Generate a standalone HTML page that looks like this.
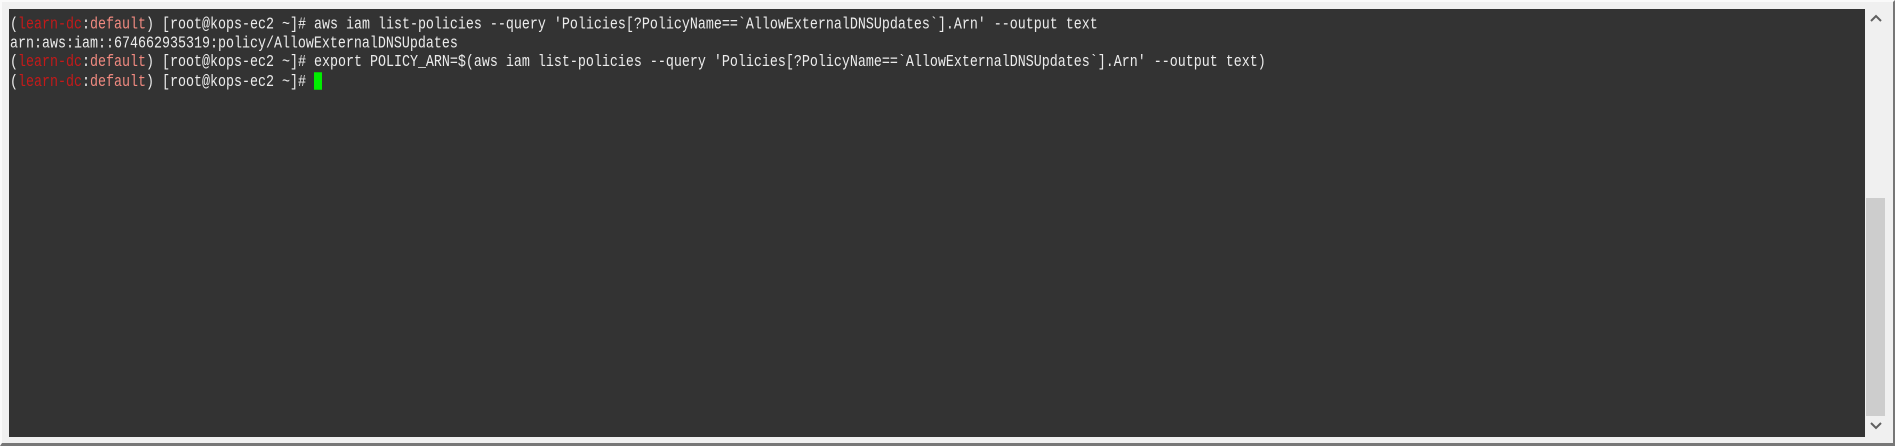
<!DOCTYPE html>
<html><head><style>
html,body{margin:0;padding:0;width:1895px;height:446px;overflow:hidden;background:#f0f0f0;}
.bord{position:absolute;left:0;top:0;border-right:2px solid #777;border-bottom:3px solid #777;border-left:2px solid #fafafa;border-top:2px solid #fafafa;box-sizing:border-box;width:1895px;height:446px;}
.term{position:absolute;left:9px;top:9px;width:1856px;height:428px;background:#333333;}
.txt{position:absolute;left:10px;top:16px;font-family:"Liberation Mono",monospace;font-size:13.33px;color:#ececec;transform:scaleY(1.25);transform-origin:0 0;}
.l{height:15px;line-height:15px;white-space:pre;}
.r{color:#c41a1a}.p{color:#f08a80}
.cur{display:inline-block;width:8px;height:14px;background:#00ee00;vertical-align:-3px;}
.sb{position:absolute;left:1866px;top:9px;width:19px;height:428px;background:#f0f0f0;}
.thumb{position:absolute;left:1866px;top:198px;width:19px;height:218px;background:#cdcdcd;}
</style></head><body>
<div class="bord"></div>
<div class="term"></div>
<div class="sb"></div>
<div class="thumb"></div>
<svg style="position:absolute;left:1870px;top:14px" width="12" height="10"><path d="M1 7 L6 2 L11 7" stroke="#606060" stroke-width="2" fill="none"/></svg>
<svg style="position:absolute;left:1870px;top:421px" width="12" height="10"><path d="M1 2 L6 7 L11 2" stroke="#606060" stroke-width="2" fill="none"/></svg>
<div class="txt"><div class="l">(<span class="r">learn-dc</span>:<span class="p">default</span>) [root@kops-ec2 ~]# aws iam list-policies --query 'Policies[?PolicyName==`AllowExternalDNSUpdates`].Arn' --output text</div><div class="l">arn:aws:iam::674662935319:policy/AllowExternalDNSUpdates</div><div class="l">(<span class="r">learn-dc</span>:<span class="p">default</span>) [root@kops-ec2 ~]# export POLICY_ARN=$(aws iam list-policies --query 'Policies[?PolicyName==`AllowExternalDNSUpdates`].Arn' --output text)</div><div class="l">(<span class="r">learn-dc</span>:<span class="p">default</span>) [root@kops-ec2 ~]# <span class="cur"></span></div></div>
</body></html>
